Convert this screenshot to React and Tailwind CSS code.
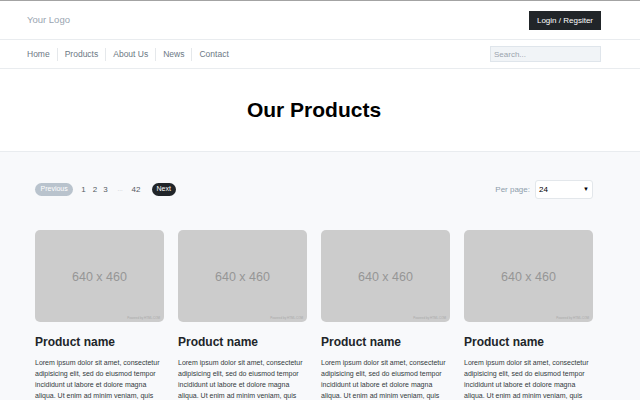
import React from 'react'

const navLinks = ['Home', 'Products', 'About Us', 'News', 'Contact']

const lorem =
  'Lorem ipsum dolor sit amet, consectetur adipisicing elit, sed do eiusmod tempor incididunt ut labore et dolore magna aliqua. Ut enim ad minim veniam, quis nostrud exercitation ullamco laboris nisi ut aliquip ex ea commodo consequat.'

const ProductCard = () => (
  <div className="flex flex-col">
    {/* Placeholder image */}
    <div className="relative h-[92px] rounded-[5px] bg-[#cccccc] flex items-center justify-center pt-[3px]">
      <span className="text-[12.5px] text-[#969696]">640 x 460</span>
      <span className="absolute right-[4px] bottom-[2px] text-[3px] text-[#a9a9a9]">Powered by HTML.COM</span>
    </div>
    <h3 className="mt-[12px] text-[12px] font-bold text-[#212529] leading-[16px]">Product name</h3>
    <p className="mt-[7px] text-[7px] leading-[11px] text-[#333a40]">{lorem}</p>
  </div>
)

export default function App() {
  return (
    <div className="w-[640px] h-[400px] overflow-hidden bg-white font-['Liberation_Sans',Arial,sans-serif]">
      {/* Header */}
      <header className="border-t border-[#a3a3a3]">
        <div className="w-[628px] h-[38px] px-[27px] flex items-center justify-between">
          <span className="text-[9.5px] text-[#9aa5b1]">Your Logo</span>
          <button className="h-[19px] px-[8px] bg-[#212529] text-white text-[8px] mt-[1px]">Login / Regsiter</button>
        </div>
      </header>

      {/* Nav */}
      <nav className="border-t border-b border-[#e9ecef]">
        <div className="w-[628px] h-[28px] px-[27px] flex items-center justify-between">
          <ul className="flex items-center">
            {navLinks.map((link, i) => (
              <li key={link} className="flex items-center">
                {i > 0 && <span className="w-px h-[13px] bg-[#e5e8eb] mx-[7px]" />}
                <span className="text-[8.5px] text-[#6c7884]">{link}</span>
              </li>
            ))}
          </ul>
          <input
            placeholder="Search..."
            className="w-[111px] h-[16px] bg-[#f1f4f7] border border-[#dfe5eb] px-[3px] text-[8px] text-[#555] placeholder:text-[#9aa3ad] outline-none"
          />
        </div>
      </nav>

      {/* Hero */}
      <section className="border-b border-[#e9ecef]">
        <div className="w-[628px] h-[82px] flex items-center justify-center">
          <h1 className="text-[21px] font-bold text-black">Our Products</h1>
        </div>
      </section>

      {/* Products */}
      <section className="bg-[#f8f9fb] h-[260px]">
        <div className="w-[628px] px-[35px] pt-[28px]">
          <div className="flex items-center justify-between">
            <div className="flex items-center text-[8px] text-[#555c63]">
              <span className="h-[13px] px-[5.5px] rounded-full bg-[#b9c3cd] text-white text-[7px] flex items-center">Previous</span>
              <span className="ml-[8px]">1</span>
              <span className="ml-[7px]">2</span>
              <span className="ml-[6px]">3</span>
              <span className="ml-[10px] text-[6px] text-[#b5bcc3]">...</span>
              <span className="ml-[9px]">42</span>
              <span className="ml-[11px] h-[13px] px-[5px] rounded-full bg-[#212529] text-white text-[7px] flex items-center">Next</span>
            </div>
            <div className="flex items-center">
              <span className="text-[8px] text-[#8e9dab] mr-[5px]">Per page:</span>
              <div className="w-[58px] h-[19px] bg-white border border-[#e3e7eb] rounded-[3px] flex items-center justify-between px-[3px]">
                <span className="text-[8px] text-black">24</span>
                <span className="text-[6px] text-black">▼</span>
              </div>
            </div>
          </div>

          <div className="grid grid-cols-4 gap-[14px] mt-[31px]">
            <ProductCard />
            <ProductCard />
            <ProductCard />
            <ProductCard />
          </div>
        </div>
      </section>
    </div>
  )
}
